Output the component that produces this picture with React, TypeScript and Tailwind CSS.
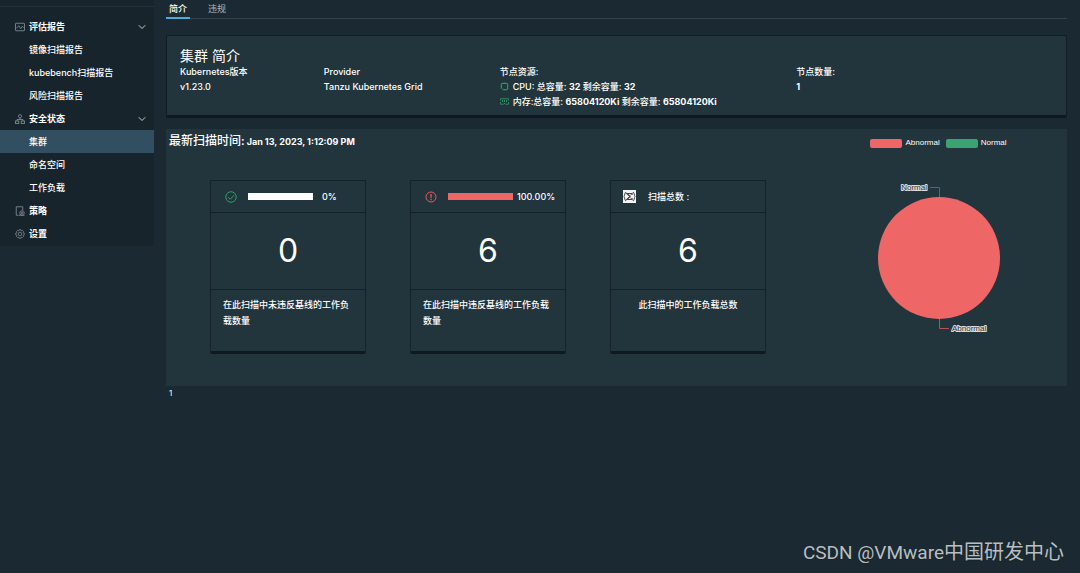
import React from "react";

const fontStack = "font-[Inter,'Noto_Sans_CJK_SC',sans-serif]";

const ImageIcon = () => (
  <svg className="size-[10px]" viewBox="0 0 20 18" fill="none" stroke="currentColor" strokeWidth="1.8">
    <rect x="1" y="1.5" width="18" height="15" rx="1" />
    <path d="M3 11.5l4.500-5 4 5.500 3-4.500 3 3" />
  </svg>
);

const OrgIcon = () => (
  <svg className="size-[10px]" viewBox="0 0 20 20" fill="none" stroke="currentColor" strokeWidth="1.8">
    <circle cx="10" cy="4.5" r="3.2" />
    <path d="M10 8v3M4 14v-3h12v3" />
    <rect x="1" y="14" width="6.5" height="5" />
    <rect x="12.5" y="14" width="6.5" height="5" />
  </svg>
);

const PolicyIcon = () => (
  <svg className="size-[10px]" viewBox="0 0 20 20" fill="none" stroke="currentColor" strokeWidth="1.8">
    <path d="M7 18.5H2.5v-17h13v7" />
    <circle cx="14" cy="14" r="4.5" />
    <circle cx="14" cy="14" r="1.5" />
    <path d="M8 18.5h11" />
  </svg>
);

const GearIcon = () => (
  <svg className="size-[10px]" viewBox="0 0 20 20" fill="none" stroke="currentColor" strokeWidth="1.6">
    <path d="M8 1.5h4l.6 2.3 2.2-1 2.5 2.6-1.1 2.1 2.3.7v3.6l-2.3.7 1.1 2.2-2.5 2.5-2.2-1.1-.6 2.4H8l-.6-2.4-2.2 1.1-2.5-2.5 1.1-2.2-2.3-.7V8.2l2.3-.7-1.1-2.1 2.5-2.6 2.2 1z" />
    <circle cx="10" cy="10" r="3.5" />
  </svg>
);

const ChevronIcon = () => (
  <svg className="ml-auto size-2" viewBox="0 0 16 16" fill="none" stroke="#c3cdd2" strokeWidth="2">
    <path d="M1.500 4.500L8 11l6.500-6.500" />
  </svg>
);

const CpuIcon = () => (
  <svg className="size-[9px]" viewBox="0 0 18 18" fill="none" stroke="#2f8f65" strokeWidth="2">
    <path d="M3 3h12v12H6l-3-3z" />
    <path d="M0 5.500h2M0 9h2M0 12.500h2M16 5.500h2M16 9h2M16 12.500h2M6 0v2M9 0v2M12 0v2M6 16v2M9 16v2M12 16v2" strokeWidth="1" />
  </svg>
);

const MemoryIcon = () => (
  <svg className="h-[7px] w-[9px]" viewBox="0 0 18 14" fill="none" stroke="#2f8f65" strokeWidth="1.8">
    <path d="M1 5V1.500h16V5M1 8v4.500h6l1-1.500h2l1 1.500h6V8" />
    <path d="M5 4v4M9 4v4M13 4v4" strokeWidth="2" />
  </svg>
);

const CheckIcon = () => (
  <svg className="size-3" viewBox="0 0 24 24" fill="none" stroke="#369a6c" strokeWidth="2">
    <circle cx="12" cy="12" r="10.500" />
    <path d="M6.500 12.500l4 4 7.500-8" />
  </svg>
);

const AlertIcon = () => (
  <svg className="size-3" viewBox="0 0 24 24" fill="none" stroke="#e35d60" strokeWidth="2">
    <circle cx="12" cy="12" r="10" />
    <path d="M12 6v7.500M12 15.500v3" strokeWidth="2.600" />
  </svg>
);

const SumIcon = () => (
  <svg className="size-[13px]" viewBox="0 0 26 26" fill="none" stroke="#444" strokeWidth="2">
    <path fill="#f4f4f4" stroke="none" d="M0 0h26v26H0z" />
    <path d="M6 4C3 5 4 10 2 13c2 3 1 8 4 9M20 4c3 1 2 6 4 9-2 3-1 8-4 9" />
    <path d="M18 10V7H8l6 6-6 6h10v-3" strokeWidth="2.400" />
    <path d="M7 5l12 16M19 5L7 21" strokeWidth="1" />
  </svg>
);

const menu = [
  { title: "评估报告", icon: <ImageIcon />, items: ["镜像扫描报告", "kubebench扫描报告", "风险扫描报告"] },
  { title: "安全状态", icon: <OrgIcon />, items: ["集群", "命名空间", "工作负载"] },
  { title: "策略", icon: <PolicyIcon />, items: [] },
  { title: "设置", icon: <GearIcon />, items: [] },
];

const Sidebar = () => (
  <aside className="w-[154px] shrink-0">
    <nav className="bg-[#17242b] pt-[6px] pb-px">
      <div className="border-t border-[#22323a] pt-2">
        {menu.map((group) => (
          <div key={group.title}>
            <button className="flex h-[23px] w-full items-center gap-1 pr-2 pl-[15px] font-bold text-[#7b8a92]">
              {group.icon}
              <span className="text-white">{group.title}</span>
              {group.items.length > 0 && <ChevronIcon />}
            </button>
            {group.items.map((item) => (
              <a
                key={item}
                href="#"
                className={`flex h-[23px] items-center pl-[29px] font-medium ${item === "集群" ? "bg-[#324f62]" : ""}`}
              >
                {item}
              </a>
            ))}
          </div>
        ))}
      </div>
    </nav>
  </aside>
);

const ClusterInfo = () => (
  <section className="mt-4 rounded-xs border border-b-3 border-[#131e24] border-b-[#10191e] bg-[#22343c] px-[13px] pt-3 pb-[6px]">
    <h1 className="text-[14px] leading-4 font-normal">集群 简介</h1>
    <div className="grid grid-cols-[144fr_176fr_297fr_257fr] leading-[15px] font-medium">
      <div>
        <p>Kubernetes版本</p>
        <p>v1.23.0</p>
      </div>
      <div>
        <p>Provider</p>
        <p>Tanzu Kubernetes Grid</p>
      </div>
      <div>
        <p>节点资源:</p>
        <p className="flex items-center gap-1">
          <CpuIcon />
          <span>CPU: 总容量: <b>32</b> 剩余容量: <b>32</b></span>
        </p>
        <p className="flex items-center gap-1">
          <MemoryIcon />
          <span>内存:总容量: <b>65804120Ki</b> 剩余容量: <b>65804120Ki</b></span>
        </p>
      </div>
      <div>
        <p>节点数量:</p>
        <p className="font-bold">1</p>
      </div>
    </div>
  </section>
);

interface StatCardProps {
  header: React.ReactNode;
  value: number;
  children: React.ReactNode;
}

const StatCard = ({ header, value, children }: StatCardProps) => (
  <article className="w-[156px] rounded-xs border border-b-3 border-[#15222a] border-b-[#10191e] font-medium">
    <div className="flex h-[31px] items-center px-3">{header}</div>
    <div className="flex h-[78px] items-center justify-center border-y border-[#15222a] text-[32px] font-normal">
      {value}
    </div>
    <div className="h-[61px] px-3 pt-[7px] leading-4">{children}</div>
  </article>
);

const PieChart = () => (
  <div className="flex w-[257px] flex-col items-center pt-2 font-['Liberation_Sans',sans-serif]">
    <div className="flex gap-[6px] text-[8px] leading-3 text-white">
      <button className="flex items-center gap-[3px]">
        <span className="h-[9px] w-8 rounded-xs bg-[#ee6666]" />
        Abnormal
      </button>
      <button className="flex items-center gap-[3px]">
        <span className="h-[9px] w-8 rounded-xs bg-[#3ba272]" />
        Normal
      </button>
    </div>
    <svg className="mt-7 h-[160px] w-[160px]" viewBox="0 0 160 160" fontSize="8">
      <circle cx="80" cy="81" r="61" fill="#ee6666" />
      <path d="M80.500 20V10.500H71" fill="none" stroke="#2f7f5e" />
      <path d="M80.500 142v9.500H90" fill="none" stroke="#b35358" />
      <g fill="#333" stroke="#ddd" strokeWidth="2" strokeLinejoin="round" paintOrder="stroke">
        <text x="68" y="13" textAnchor="end">Normal</text>
        <text x="93" y="154">Abnormal</text>
      </g>
    </svg>
  </div>
);

const ScanReport = () => (
  <section className="mt-[11px] flex min-h-[257px] bg-[#22343c]">
    <div className="flex-1">
      <h2 className="flex items-baseline gap-[2px] pt-1 pl-[3px] text-[12px] leading-4 font-medium">
        最新扫描时间: <span className="text-[9px] font-bold">Jan 13, 2023, 1:12:09 PM</span>
      </h2>
      <div className="mt-[30px] flex justify-evenly">
        <StatCard
          value={0}
          header={
            <>
              <span className="pl-[2px]"><CheckIcon /></span>
              <span className="mr-[9px] ml-[11px] h-[7px] w-[65px] shrink-0 bg-white" />
              0%
            </>
          }
        >
          在此扫描中未违反基线的工作负载数量
        </StatCard>
        <StatCard
          value={6}
          header={
            <>
              <span className="pl-[2px]"><AlertIcon /></span>
              <span className="mr-1 ml-[11px] h-[7px] w-[65px] shrink-0 bg-[#ee6666]" />
              100.00%
            </>
          }
        >
          在此扫描中违反基线的工作负载数量
        </StatCard>
        <StatCard
          value={6}
          header={
            <>
              <SumIcon />
              <span className="ml-3">扫描总数 :</span>
            </>
          }
        >
          <p className="text-center">此扫描中的工作负载总数</p>
        </StatCard>
      </div>
    </div>
    <PieChart />
  </section>
);

export default function App() {
  return (
    <div className={`relative flex min-h-screen bg-[#1b2a32] text-[9px] text-white ${fontStack}`}>
      <Sidebar />
      <main className="flex flex-1 flex-col pr-[13px] pl-3">
        {/* Tabs */}
        <div className="flex h-[19px] gap-4 border-b border-[#34434b]">
          <button className="h-[19px] border-b-2 border-[#49afd9] px-[3px] font-medium">简介</button>
          <button className="h-[19px] border-b-2 border-transparent px-[2px] text-[#aab5bb]">违规</button>
        </div>
        <ClusterInfo />
        <ScanReport />
        <p className="pt-px pl-[3px] text-[8px] leading-3">1</p>
      </main>
      <p className="absolute right-4 bottom-2 font-[Roboto,'Noto_Sans_CJK_SC',sans-serif] text-[20px] leading-6 font-normal text-[#b9bec1] text-shadow-xs">
        <span className="text-[19px]">CSDN @VMware</span>中国研发中心
      </p>
    </div>
  );
}
